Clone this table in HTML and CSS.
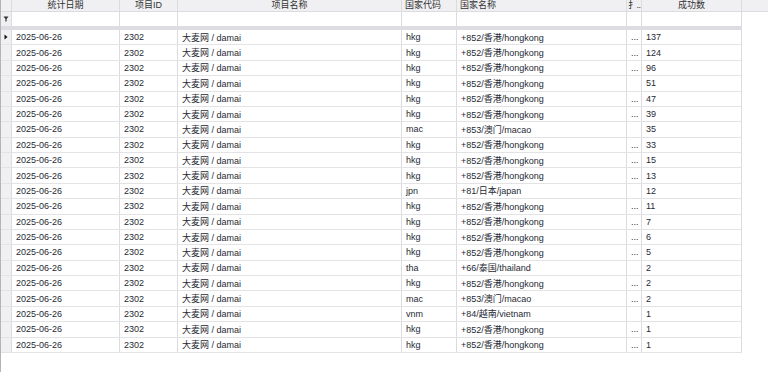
FILE: index.html
```html
<!DOCTYPE html>
<html>
<head>
<meta charset="utf-8">
<link rel="stylesheet" href="styles.css">
</head>
<body>
<div class="page">
  <div class="grid">
    <div class="hdr row">
      <div class="c ind"></div>
      <div class="c ctr">统计日期</div>
      <div class="c ctr">项目ID</div>
      <div class="c ctr">项目名称</div>
      <div class="c">国家代码</div>
      <div class="c">国家名称</div>
      <div class="c clip">扌..</div>
      <div class="c ctr">成功数</div>
      <div class="fill"></div>
    </div>
    <div class="filter row">
      <div class="c ind"><svg width="6" height="6" viewBox="0 0 6 6"><path d="M0.5 0.5h5L3.6 3v2.5H2.4V3z" fill="#333"/></svg></div>
      <div class="c"></div><div class="c"></div><div class="c"></div><div class="c"></div><div class="c"></div><div class="c"></div><div class="c"></div>
    </div>
    <div class="band"></div>
    <div class="body">
      <div class="row d"><div class="c ind"><svg width="4" height="6" viewBox="0 0 4 6"><path d="M0.5 0.5L3.5 3L0.5 5.5z" fill="#111"/></svg></div><div class="c">2025-06-26</div><div class="c">2302</div><div class="c">大麦网 / damai</div><div class="c">hkg</div><div class="c">+852/香港/hongkong</div><div class="c">...</div><div class="c">137</div></div>
      <div class="row d"><div class="c ind"></div><div class="c">2025-06-26</div><div class="c">2302</div><div class="c">大麦网 / damai</div><div class="c">hkg</div><div class="c">+852/香港/hongkong</div><div class="c">...</div><div class="c">124</div></div>
      <div class="row d"><div class="c ind"></div><div class="c">2025-06-26</div><div class="c">2302</div><div class="c">大麦网 / damai</div><div class="c">hkg</div><div class="c">+852/香港/hongkong</div><div class="c">...</div><div class="c">96</div></div>
      <div class="row d"><div class="c ind"></div><div class="c">2025-06-26</div><div class="c">2302</div><div class="c">大麦网 / damai</div><div class="c">hkg</div><div class="c">+852/香港/hongkong</div><div class="c"></div><div class="c">51</div></div>
      <div class="row d"><div class="c ind"></div><div class="c">2025-06-26</div><div class="c">2302</div><div class="c">大麦网 / damai</div><div class="c">hkg</div><div class="c">+852/香港/hongkong</div><div class="c">...</div><div class="c">47</div></div>
      <div class="row d"><div class="c ind"></div><div class="c">2025-06-26</div><div class="c">2302</div><div class="c">大麦网 / damai</div><div class="c">hkg</div><div class="c">+852/香港/hongkong</div><div class="c">...</div><div class="c">39</div></div>
      <div class="row d"><div class="c ind"></div><div class="c">2025-06-26</div><div class="c">2302</div><div class="c">大麦网 / damai</div><div class="c">mac</div><div class="c">+853/澳门/macao</div><div class="c"></div><div class="c">35</div></div>
      <div class="row d"><div class="c ind"></div><div class="c">2025-06-26</div><div class="c">2302</div><div class="c">大麦网 / damai</div><div class="c">hkg</div><div class="c">+852/香港/hongkong</div><div class="c">...</div><div class="c">33</div></div>
      <div class="row d"><div class="c ind"></div><div class="c">2025-06-26</div><div class="c">2302</div><div class="c">大麦网 / damai</div><div class="c">hkg</div><div class="c">+852/香港/hongkong</div><div class="c">...</div><div class="c">15</div></div>
      <div class="row d"><div class="c ind"></div><div class="c">2025-06-26</div><div class="c">2302</div><div class="c">大麦网 / damai</div><div class="c">hkg</div><div class="c">+852/香港/hongkong</div><div class="c">...</div><div class="c">13</div></div>
      <div class="row d"><div class="c ind"></div><div class="c">2025-06-26</div><div class="c">2302</div><div class="c">大麦网 / damai</div><div class="c">jpn</div><div class="c">+81/日本/japan</div><div class="c"></div><div class="c">12</div></div>
      <div class="row d"><div class="c ind"></div><div class="c">2025-06-26</div><div class="c">2302</div><div class="c">大麦网 / damai</div><div class="c">hkg</div><div class="c">+852/香港/hongkong</div><div class="c">...</div><div class="c">11</div></div>
      <div class="row d"><div class="c ind"></div><div class="c">2025-06-26</div><div class="c">2302</div><div class="c">大麦网 / damai</div><div class="c">hkg</div><div class="c">+852/香港/hongkong</div><div class="c">...</div><div class="c">7</div></div>
      <div class="row d"><div class="c ind"></div><div class="c">2025-06-26</div><div class="c">2302</div><div class="c">大麦网 / damai</div><div class="c">hkg</div><div class="c">+852/香港/hongkong</div><div class="c">...</div><div class="c">6</div></div>
      <div class="row d"><div class="c ind"></div><div class="c">2025-06-26</div><div class="c">2302</div><div class="c">大麦网 / damai</div><div class="c">hkg</div><div class="c">+852/香港/hongkong</div><div class="c">...</div><div class="c">5</div></div>
      <div class="row d"><div class="c ind"></div><div class="c">2025-06-26</div><div class="c">2302</div><div class="c">大麦网 / damai</div><div class="c">tha</div><div class="c">+66/泰国/thailand</div><div class="c"></div><div class="c">2</div></div>
      <div class="row d"><div class="c ind"></div><div class="c">2025-06-26</div><div class="c">2302</div><div class="c">大麦网 / damai</div><div class="c">hkg</div><div class="c">+852/香港/hongkong</div><div class="c">...</div><div class="c">2</div></div>
      <div class="row d"><div class="c ind"></div><div class="c">2025-06-26</div><div class="c">2302</div><div class="c">大麦网 / damai</div><div class="c">mac</div><div class="c">+853/澳门/macao</div><div class="c">...</div><div class="c">2</div></div>
      <div class="row d"><div class="c ind"></div><div class="c">2025-06-26</div><div class="c">2302</div><div class="c">大麦网 / damai</div><div class="c">vnm</div><div class="c">+84/越南/vietnam</div><div class="c"></div><div class="c">1</div></div>
      <div class="row d"><div class="c ind"></div><div class="c">2025-06-26</div><div class="c">2302</div><div class="c">大麦网 / damai</div><div class="c">hkg</div><div class="c">+852/香港/hongkong</div><div class="c">...</div><div class="c">1</div></div>
      <div class="row d"><div class="c ind"></div><div class="c">2025-06-26</div><div class="c">2302</div><div class="c">大麦网 / damai</div><div class="c">hkg</div><div class="c">+852/香港/hongkong</div><div class="c">...</div><div class="c">1</div></div>
    </div>
  </div>
</div>
</body>
</html>
```

FILE: styles.css
```css
* { box-sizing: border-box; }
html, body { margin: 0; padding: 0; background: #fff; }
body {
  font-family: "Liberation Sans", "Noto Sans CJK SC", sans-serif;
  font-size: 9px;
  color: #262a33;
  width: 768px;
  height: 372px;
  overflow: hidden;
}
.page {
  height: 372px;
  border-left: 1px solid #b4b4b8;
}
.grid {
  width: 767px;
}
.row {
  display: grid;
  grid-template-columns: 11px 108px 58px 224px 55px 170px 15px 100px;
}
.c {
  border-right: 1px solid #dcdce0;
  padding-left: 3px;
  white-space: nowrap;
  overflow: hidden;
  display: flex;
  align-items: center;
}
.ind {
  background: #f0f0f2;
  padding-left: 3px;
  border-right: 1px solid #dcdce0;
}
.ctr { justify-content: center; padding-left: 0; }
.clip { padding-left: 1px; letter-spacing: -0.5px; }

.hdr {
  grid-template-columns: 11px 108px 58px 224px 55px 170px 15px 100px 1fr;
  height: 12px;
  background: #f0f0f2;
  border-bottom: 1px solid #dcdce0;
}
.hdr .c {
  align-items: flex-end;
  line-height: 10px;
  padding-bottom: 1px;
  color: #333;
}
.hdr .fill { background: #f0f0f2; }

.filter {
  width: 741px;
  height: 15px;
  border-bottom: 1px solid #dcdce0;
}
.filter .ind { padding-left: 2px; }

.band {
  width: 741px;
  height: 3px;
  background: #dcdce1;
}

.body {
  width: 741px;
}
.d {
  height: 15.38px;
  border-bottom: 1px solid #e3e3e6;
}
.d .c { padding-left: 4px; }
.d .ind { padding-left: 3px; }
```
